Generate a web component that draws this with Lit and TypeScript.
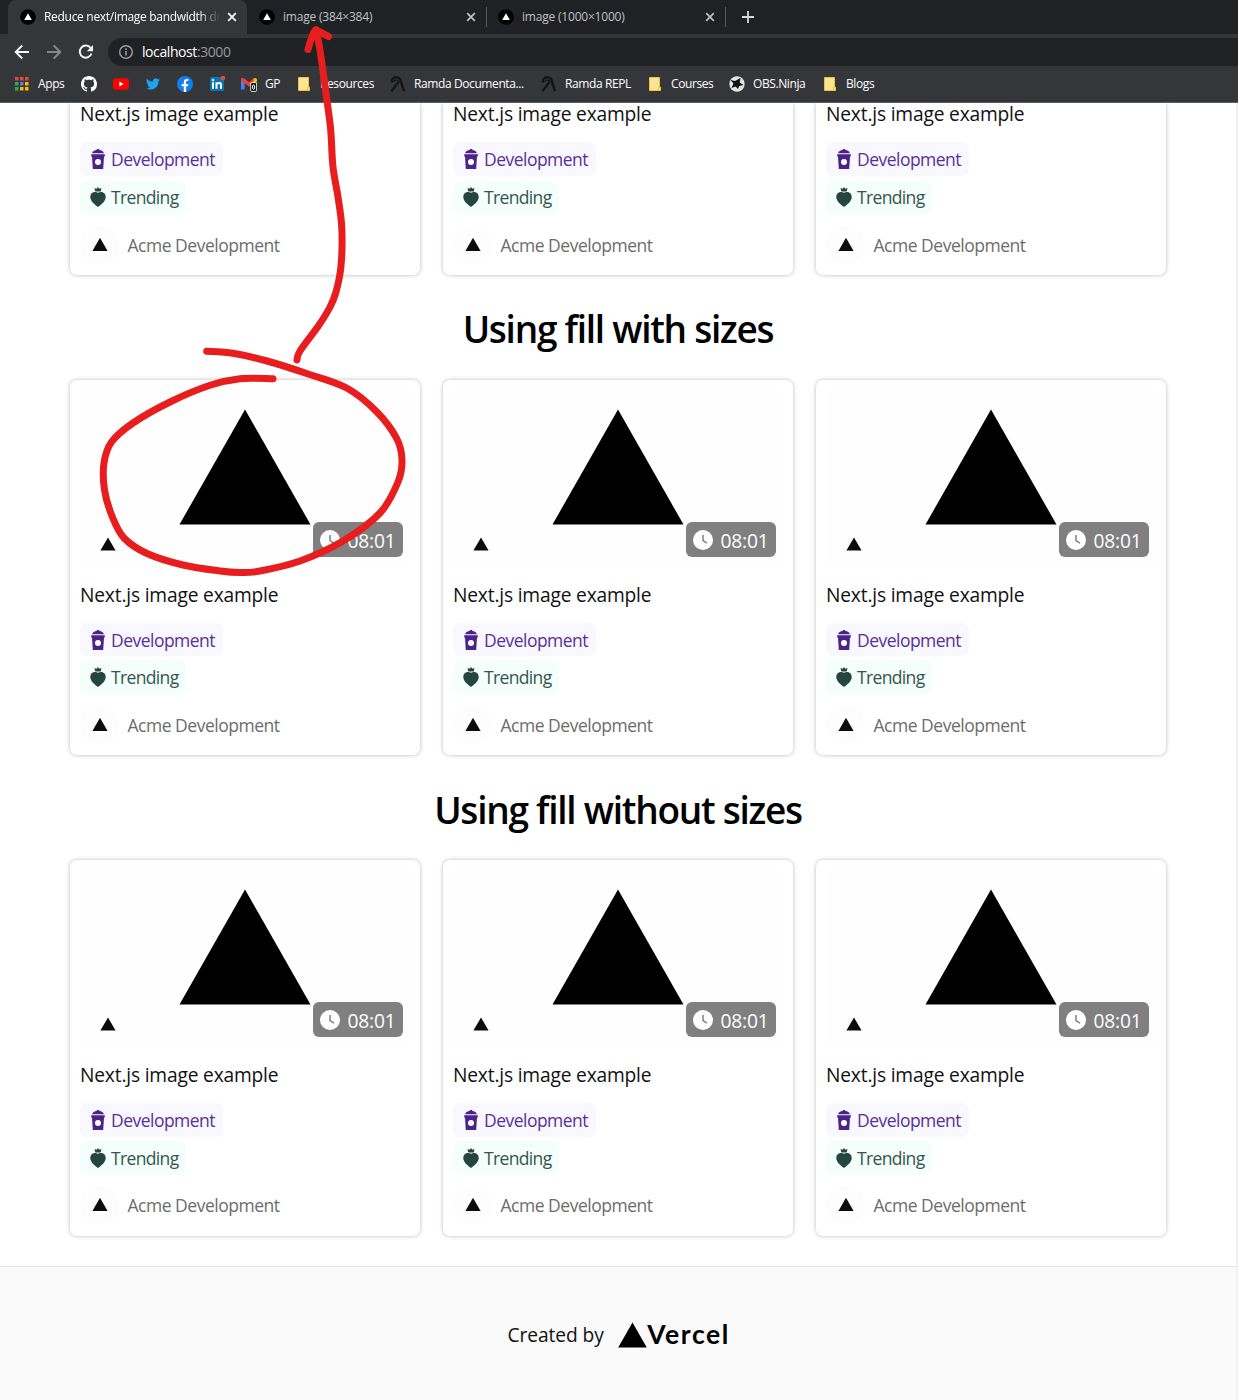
import { LitElement, html, css, svg, nothing } from "lit";
import { customElement, property } from "lit/decorators.js";

type Point = [number, number];

/** Catmull-Rom spline through the points, written as cubic segments. */
function smooth(p: Point[]): string {
  let d = `M${p[0][0]} ${p[0][1]}`;
  for (let i = 0; i < p.length - 1; i++) {
    const a = p[Math.max(0, i - 1)];
    const b = p[i];
    const c = p[i + 1];
    const e = p[Math.min(p.length - 1, i + 2)];
    d += `C${b[0] + (c[0] - a[0]) / 6} ${b[1] + (c[1] - a[1]) / 6} ${c[0] - (e[0] - b[0]) / 6} ${c[1] - (e[1] - b[1]) / 6} ${c[0]} ${c[1]}`;
  }
  return d;
}

const LOOP: Point[] = [
  [206.7, 351.2], [233, 353.3], [267, 361], [306.7, 373.5], [346.7, 388], [376.7, 411.7], [396.7, 438.5],
  [402, 460], [398, 482], [380, 513], [343, 541], [300, 561], [260, 571], [240, 572.5], [220, 571],
  [183, 565], [147, 553.5], [124, 538], [112, 516], [104.5, 490], [104, 463], [111.5, 442], [133, 423],
  [170, 402], [210, 385.3], [240, 378.7], [273, 378.7],
];
const SHAFT: Point[] = [
  [297, 360], [300, 351], [319, 325], [330, 307], [336, 292], [341, 266], [341.800, 228], [338, 197],
  [333, 167], [330.7, 130], [327, 101], [320, 50], [316, 31],
];
const HEAD: Point[] = [[308, 49.5], [311.5, 38], [315.5, 30], [319, 31.5], [328.5, 36.5]];

const folder = svg`<path d="M2.5 1.5h10v9.5h1v3.500h-11z" fill="#fee391" stroke="#e9c441"/><path d="M11.500 14.500v-3h2" fill="none" stroke="#e9c441"/>`;
const ramda = svg`<g fill="none" stroke="#141414" stroke-linecap="round"><path d="M2 5.500C1.500 2 5 .8 7.500 1.400c3 .5 3.500 3 4 6l2.200 6.600" stroke-width="2.400"/><path d="M8.500 6 2 14.500" stroke-width="2.300"/><path d="M4 5.500c1-2 3-1.500 4-1" stroke-width="1.200"/></g>`;

const ICONS: Record<string, unknown> = {
  apps: svg`${[0, 1, 2].map((r) => [0, 1, 2].map((c) => svg`<rect x=${1 + c * 5} y=${1 + r * 5} width="3.500" height="3.500"
    fill=${[["#e8453c", "#e8453c", "#e8453c"], ["#34a853", "#4285f4", "#fbbc05"], ["#34a853", "#fbbc05", "#fbbc05"]][r][c]}/>`))}`,
  github: svg`<path fill="#fff" d="M8 0C3.580 0 0 3.580 0 8c0 3.540 2.290 6.530 5.470 7.590.4.070.55-.17.55-.38 0-.19-.01-.82-.01-1.490-2.010.37-2.530-.49-2.690-.94-.09-.23-.48-.94-.82-1.130-.28-.15-.68-.52-.01-.53.63-.01 1.080.58 1.230.82.72 1.210 1.870.87 2.330.66.07-.52.28-.87.51-1.070-1.780-.2-3.640-.89-3.640-3.950 0-.87.31-1.590.82-2.150-.08-.2-.36-1.020.08-2.120 0 0 .67-.21 2.200.82.64-.18 1.320-.27 2-.27s1.360.09 2 .27c1.530-1.040 2.200-.82 2.200-.82.44 1.100.16 1.920.08 2.120.51.56.82 1.270.82 2.150 0 3.070-1.870 3.750-3.650 3.950.29.25.54.73.54 1.480 0 1.070-.01 1.930-.01 2.200 0 .21.15.46.55.38A8.010 8.010 0 0 0 16 8c0-4.420-3.580-8-8-8z"/>`,
  youtube: svg`<rect y="2.300" width="16" height="11.500" rx="3" fill="#f00"/><path d="M6.400 5.600v4.800l4.200-2.400z" fill="#fff"/>`,
  twitter: svg`<path fill="#1da1f2" transform="translate(1 1) scale(.58)" d="M23.950 4.570a10 10 0 0 1-2.820.77 4.960 4.960 0 0 0 2.160-2.720c-.95.56-2 .96-3.130 1.180a4.920 4.920 0 0 0-8.380 4.480C7.690 8.100 4.070 6.130 1.640 3.160a4.920 4.920 0 0 0 1.520 6.570 4.900 4.900 0 0 1-2.230-.61v.06a4.920 4.920 0 0 0 3.950 4.830 5 5 0 0 1-2.210.08 4.940 4.940 0 0 0 4.600 3.420A9.870 9.870 0 0 1 0 19.540a14 14 0 0 0 7.550 2.210c9.050 0 14-7.500 14-13.980 0-.21 0-.42-.02-.63a9.940 9.940 0 0 0 2.460-2.550z"/>`,
  facebook: svg`<circle cx="8" cy="8" r="8" fill="#1080f0"/><path fill="#fff" d="M6.800 16v-5.800H4.700V8h2.100V6.200c0-2.100 1.200-3.200 3-3.200.7 0 1.500.1 1.500.1v1.900h-.9c-1 0-1.300.6-1.300 1.200V8h2.200l-.4 2.200H9.100V16z"/>`,
  linkedin: svg`<rect x="1" y="1" width="14" height="14" rx="1" fill="#0a75b5"/><g fill="#fff"><rect x="3" y="6.200" width="2" height="6.500"/><circle cx="4" cy="4" r="1.200"/><path d="M6.500 6.200h2v.9c.8-1.500 4.500-1.600 4.500 1.600v4h-2V9.300c0-1.900-2.500-1.700-2.500 0v3.400h-2z"/></g><circle cx="14" cy="2" r="2.300" fill="#e8453c"/>`,
  gmail: svg`<path d="M0 4v9.500h3.600V7z" fill="#4285f4"/><path d="M12.400 13.500H16V4l-3.600 3z" fill="#34a853"/><path d="M0 3.500C0 1.600 2 1.700 3 2.300L8 6.200l4.400-3.600V7L8 10.500 0 4.800z" fill="#ea4335"/><path d="M12.400 2.600C14 1.300 16 2 16 4v1l-3.600 2.500z" fill="#fbbc04"/><rect x="9.600" y="6.500" width="6" height="9" rx="1.500" fill="#111" stroke="#fff" stroke-width=".8"/><rect x="11.600" y="9" width="2" height="4.200" rx="1" fill="none" stroke="#fff"/>`,
  folder,
  ramda,
  obs: svg`<circle cx="8" cy="8" r="7.700" fill="#e4e4e4"/><path fill="#111" d="M1.500 4 6 5 11.500 2l-.8 4.500L14.500 9l-4.200 1 -1.300 3-2.500-2.500L2.500 12l2-4.500z"/>`,
};

/** icon name, label, width of the slot up to the next bookmark */
const BOOKMARKS: [string, string, number][] = [
  ["apps", "Apps", 67],
  ["github", "", 32],
  ["youtube", "", 32],
  ["twitter", "", 32],
  ["facebook", "", 32],
  ["linkedin", "", 32],
  ["gmail", "GP", 55],
  ["folder", "Resources", 94],
  ["ramda", "Ramda Documenta...", 151],
  ["ramda", "Ramda REPL", 106],
  ["folder", "Courses", 82],
  ["obs", "OBS.Ninja", 93],
  ["folder", "Blogs", 60],
];

const FONT = css`"Segoe UI", "Open Sans", "Noto Sans", sans-serif`;

@customElement("browser-chrome")
class BrowserChrome extends LitElement {
  static styles = css`
    :host { display: block; flex: none; height: 103px; background: #35363a; border-bottom: 1px solid #5c5d60; box-sizing: border-box; font: 12px/16px ${FONT}; color: #e8eaed; }
    .strip { display: flex; height: 34px; background: #202124; padding-left: 8px; }
    .tab { display: flex; align-items: center; width: 239px; box-sizing: border-box; padding: 0 9px 0 12px; color: #bdc1c6; }
    .tab.active { background: #35363a; color: #fff; border-radius: 8px 8px 0 0; }
    .tab .fav { flex: none; margin-right: 8px; }
    .label { flex: 1; min-width: 0; white-space: nowrap; overflow: hidden; letter-spacing: -0.2px; }
    .active .label { letter-spacing: -0.3px; -webkit-mask-image: linear-gradient(to right, #000 88%, transparent); mask-image: linear-gradient(to right, #000 88%, transparent); }
    .close { flex: none; margin-left: 6px; }
    .sep { width: 1px; height: 20px; margin: 7px -1px 0 0; background: #56585c; }
    .new { margin: 10px 0 0 16px; }
    .bar { display: flex; align-items: center; height: 36px; padding-left: 14px; }
    .nav { flex: none; margin-right: 16px; }
    .omni { flex: 1; display: flex; align-items: center; height: 28px; padding-left: 10px; border-radius: 14px 0 0 14px; background: #202124; font-size: 14px; margin-left: -2px; }
    .omni svg { margin-right: 8px; }
    .url { letter-spacing: -0.42px; color: #fff; }
    .port { color: #95999e; }
    .marks { display: flex; align-items: center; height: 28px; padding-left: 14px; }
    .mark { display: flex; align-items: center; gap: 8px; flex: none; white-space: nowrap; letter-spacing: -0.4px; color: #fff; }
    .mark svg { flex: none; }
  `;

  private favicon() {
    return html`<svg class="fav" width="16" height="16" viewBox="0 0 16 16"><circle cx="8" cy="8" r="7.800" fill="#000" /><path d="M8 4.200 11.800 11H4.200z" fill="#fff" /></svg>`;
  }

  private close() {
    return html`<svg class="close" width="12" height="12" viewBox="0 0 12 12"><path d="M2.200 2.200l7.600 7.600M9.800 2.200 2.200 9.800" stroke="currentColor" stroke-width="1.700" /></svg>`;
  }

  render() {
    return html`
      <div class="strip">
        <div class="tab active">${this.favicon()}<span class="label">Reduce next/image bandwidth de</span>${this.close()}</div>
        <div class="tab">${this.favicon()}<span class="label">image (384×384)</span>${this.close()}</div>
        <i class="sep"></i>
        <div class="tab">${this.favicon()}<span class="label">image (1000×1000)</span>${this.close()}</div>
        <i class="sep"></i>
        <svg class="new" width="14" height="14" viewBox="0 0 14 14"><path d="M7 1v12M1 7h12" stroke="#d5d8db" stroke-width="1.800" /></svg>
      </div>
      <div class="bar">
        <svg class="nav" width="16" height="16" viewBox="0 0 16 16" fill="none" stroke="#f1f3f4" stroke-width="1.900"><path d="M15 8H2M8.200 1.500 1.700 8l6.500 6.500" /></svg>
        <svg class="nav" width="16" height="16" viewBox="0 0 16 16" fill="none" stroke="#85878a" stroke-width="1.900"><path d="M1 8h13M7.800 1.500 14.300 8l-6.500 6.500" /></svg>
        <svg class="nav" width="16" height="16" viewBox="0 0 16 16"><path d="M13.500 9.500A6 6 0 1 1 12.600 4" fill="none" stroke="#f1f3f4" stroke-width="2" /><path d="M15 1v6.200H8.800z" fill="#f1f3f4" /></svg>
        <div class="omni">
          <svg width="16" height="16" viewBox="0 0 16 16"><circle cx="8" cy="8" r="6.300" fill="none" stroke="#9aa0a6" stroke-width="1.400" /><path d="M8 7v4.500M8 4.300v1.600" stroke="#9aa0a6" stroke-width="1.500" /></svg>
          <span class="url">localhost<span class="port">:3000</span></span>
        </div>
      </div>
      <div class="marks">
        ${BOOKMARKS.map(([icon, label, width]) => html`<div class="mark" style="width:${width}px">
          <svg width="16" height="16" viewBox="0 0 16 16">${ICONS[icon]}</svg>${label ? html`<span>${label}</span>` : nothing}
        </div>`)}
      </div>
    `;
  }
}

@customElement("video-card")
class VideoCard extends LitElement {
  @property({ type: Boolean }) compact = false;

  static styles = css`
    :host { display: block; box-sizing: border-box; height: 375.500px; padding: 10px 10.500px 0 10px; border-radius: 7px; background: #fff; box-shadow: 0 0 4px rgba(0, 0, 0, 0.28); font: 19.200px/26px ${FONT}; color: #111; }
    :host([compact]) { height: 172px; padding-top: 0; border-radius: 0 0 7px 7px; }
    :host([compact]) .title { margin: -2px 0 15px; }
    :host([compact]) .dev { margin-bottom: 5px; }
    .media { position: relative; height: 175px; margin-bottom: 17px; background: #fefefe; }
    .hero { display: block; margin: 0 auto; }
    .mini { position: absolute; left: 19.500px; bottom: 14px; }
    .badge { position: absolute; right: 7px; bottom: 7.800px; display: flex; align-items: center; gap: 7.500px; box-sizing: border-box; width: 89.500px; height: 35px; padding-left: 7px; border-radius: 6px; background: #808080; color: #fff; letter-spacing: -0.2px; }
    .badge svg { flex: none; }
    .badge span { padding-top: 2px; }
    .title { letter-spacing: -0.18px; margin-bottom: 15px; white-space: nowrap; }
    .tag { display: flex; align-items: center; box-sizing: border-box; height: 33.500px; padding-left: 9.500px; gap: 5.500px; margin-bottom: 4px; border-radius: 7px; font-size: 17.500px; white-space: nowrap; }
    .dev { width: 143px; background: #faf8ff; color: #55309a; letter-spacing: -0.52px; }
    .trend { width: 106px; background: #f4fffb; color: #36544e; letter-spacing: -0.65px; }
    .author { display: flex; align-items: center; margin-top: 12px; height: 38px; gap: 8.500px; font-size: 17.500px; color: #6c6c6c; letter-spacing: -0.48px; white-space: nowrap; }
    .avatar { display: grid; place-items: center; width: 39px; height: 39px; border-radius: 50%; background: #fdfdfd; }
  `;

  render() {
    return html`
      ${this.compact
        ? nothing
        : html`<div class="media">
            <svg class="hero" width="134" height="136" viewBox="0 0 134 136"><path d="M67 19.500 132.500 134.500H1.500z" fill="#000" /></svg>
            <svg class="mini" width="16" height="14" viewBox="0 0 16 14"><path d="M8 .5 15.600 13.500H.4z" fill="#0c0c0c" /></svg>
            <div class="badge">
              <svg width="20" height="20" viewBox="0 0 20 20"><circle cx="10" cy="10" r="10" fill="#fff" /><path d="M10 5v5.500l4 2.700" fill="none" stroke="#808080" stroke-width="1.500" /></svg>
              <span>08:01</span>
            </div>
          </div>`}
      <div class="title">Next.js image example</div>
      <div class="tag dev">
        <svg width="16" height="20" viewBox="0 0 16 20"><path d="M2 4.200C2.800 2 5 1 6.500 1 6.500-.2 9.500-.2 9.500 1c1.500 0 3.700 1 4.500 3.200zM1.200 5.200h13.600v2.200H14L13.200 20H2.800L2 7.400h-.8z" fill="#4b2389" /><circle cx="8" cy="13" r="3" fill="#fff" /></svg>
        <span>Development</span>
      </div>
      <div class="tag trend">
        <svg width="16" height="20" viewBox="0 0 16 20"><path d="M4.500 1 6.700 1.700 8 0l1.300 1.700L11.500 1l-.8 3.500H5.300z" fill="#25463f" /><path d="M8 5.800C11 4 16 5.500 15.700 10.500 15.500 14 11.500 17.500 8 20 4.500 17.500.5 14 .3 10.500 0 5.500 5 4 8 5.800z" fill="#25463f" /></svg>
        <span>Trending</span>
      </div>
      <div class="author">
        <span class="avatar"><svg width="16" height="16" viewBox="0 0 16 16"><path d="M8 .8 15.600 14H.4z" fill="#0c0c0c" /></svg></span>
        <span>Acme Development</span>
      </div>
    `;
  }
}

@customElement("app-root")
class AppRoot extends LitElement {
  static styles = css`
    :host { display: flex; flex-direction: column; position: relative; height: 1400px; width: 1238px; overflow: hidden; background: #fff; font-family: ${FONT}; }
    .page { flex: 1; display: flex; flex-direction: column; box-sizing: border-box; border-right: 2px solid #f1f1f1; min-height: 0; }
    .row { display: grid; grid-template-columns: repeat(3, 350px); column-gap: 23px; padding-left: 70px; clip-path: inset(0 0 -8px 0); }
    .row.full { clip-path: none; }
    h2 { display: flex; align-items: center; justify-content: center; height: 104.900px; padding-top: 4px; box-sizing: border-box; margin: 0; font-size: 37px; line-height: 52px; font-weight: 600; letter-spacing: -1.250px; color: #000; white-space: nowrap; }
    footer { display: flex; flex: 1; align-items: center; justify-content: center; gap: 14.500px; margin-top: 30.200px; padding-top: 3px; border-top: 1px solid #e6e6e6; background: #fafafa; font-size: 19.200px; color: #111; }
    .created { letter-spacing: -0.08px; }
    .brand { display: flex; align-items: center; font: 700 26.500px/30px "Lato", sans-serif; letter-spacing: 1.600px; margin-right: -1.500px; color: #000; }
    .brand span { margin-top: -2px; }
    .ink { position: absolute; left: 0; top: 0; pointer-events: none; }
  `;

  private row(compact: boolean) {
    return html`<div class="row ${compact ? "" : "full"}">${[0, 1, 2].map(() => html`<video-card ?compact=${compact}></video-card>`)}</div>`;
  }

  render() {
    return html`
      <browser-chrome></browser-chrome>
      <div class="page">
        ${this.row(true)}
        <h2>Using fill with sizes</h2>
        ${this.row(false)}
        <h2>Using fill without sizes</h2>
        ${this.row(false)}
        <footer>
          <span class="created">Created by</span>
          <span class="brand"><svg width="29" height="26" viewBox="0 0 29 26"><path d="M14.500 .5 28.800 25.500H.2z" /></svg><span>Vercel</span></span>
        </footer>
      </div>
      <svg class="ink" width="1238" height="1400" viewBox="0 0 1238 1400" fill="none" stroke="#e81e1e" stroke-width="7" stroke-linecap="round" stroke-linejoin="round">
        <path d=${smooth(LOOP)} /><path d=${smooth(SHAFT)} /><path d=${smooth(HEAD)} />
      </svg>
    `;
  }
}
